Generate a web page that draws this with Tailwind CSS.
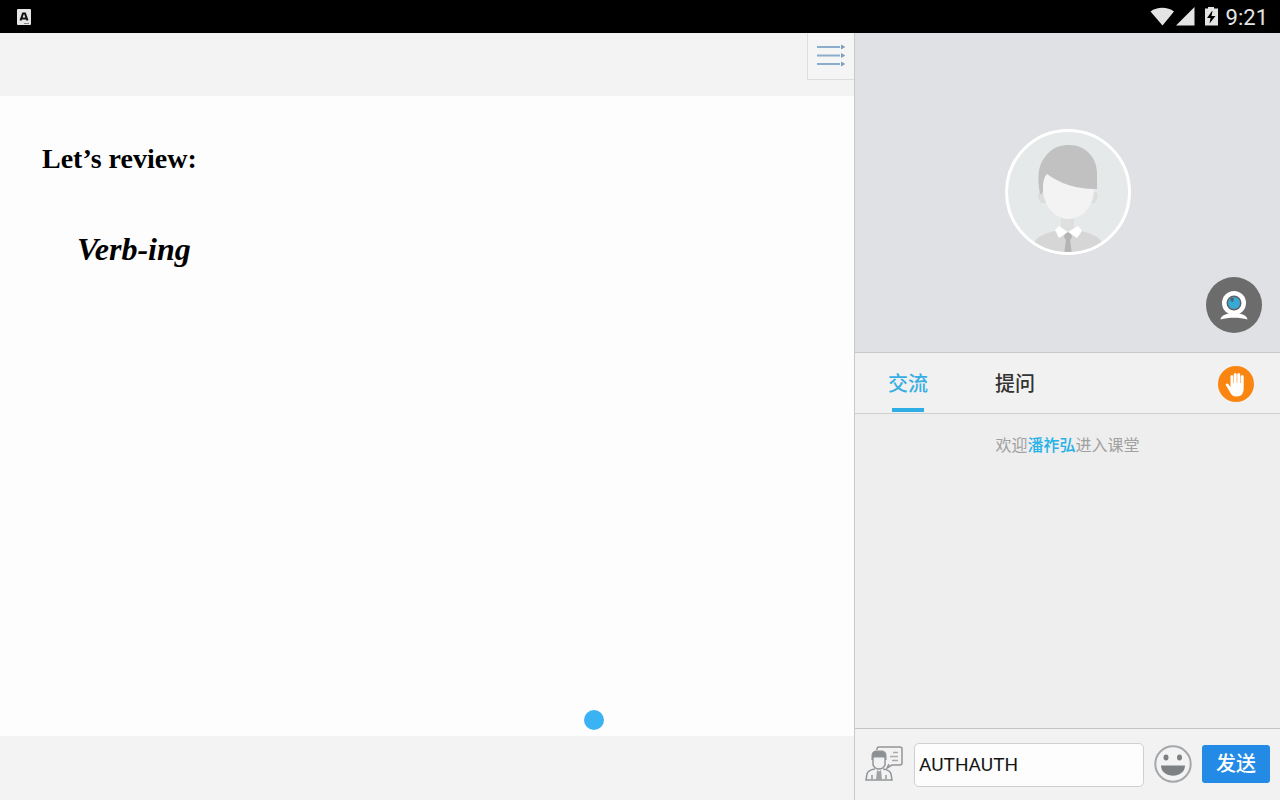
<!DOCTYPE html>
<html lang="zh-CN">
<head>
<meta charset="utf-8">
<meta name="viewport" content="width=device-width, initial-scale=1">
<title>课堂</title>
<script src="https://cdn.jsdelivr.net/npm/@tailwindcss/browser@4"></script>
</head>
<body class="flex h-screen flex-col overflow-hidden bg-[#f3f3f3] font-['Roboto','Noto_Sans_CJK_SC',sans-serif]">
<header class="flex h-[33px] shrink-0 items-center justify-between bg-black pr-3 pl-4 text-[#e4e4e4]">
  <svg class="size-4" viewBox="0 0 16 16" aria-hidden="true">
    <rect x="1" y="0" width="14" height="16" rx="1" fill="#e6e6e6"/>
    <path d="M4.500 11.500 7 4.500h2l2.500 7M5.500 9.500h5" fill="none" stroke="#111" stroke-width="2"/>
    <path d="M8 14.500h5" stroke="#888"/>
  </svg>
  <div class="flex items-center">
    <svg class="h-5 w-[68px]" viewBox="0 0 68 20" fill="#e4e4e4" aria-hidden="true">
      <path d="M.5 4.500C7-.5 17.500-.5 24 4.500L12.500 18.500Z"/>
      <path d="M26 18.500 44.500 0v18.500Z"/>
      <path fill-rule="evenodd" d="M55 1.500h3V-.5h6v2h4v17H55ZM62 4l-5 7h3.500l-1 5.500 6-7.500h-4l1-5Z"/>
    </svg>
    <time class="ml-2 pt-[2px] text-[22px] leading-8">9:21</time>
  </div>
</header>
<main class="grid min-h-0 flex-1 grid-cols-[427fr_213fr]">
  <section class="flex min-w-0 flex-col">
    <div class="flex h-[63px] shrink-0 justify-end">
      <button type="button" aria-label="目录" class="flex h-[47px] w-[47px] items-center justify-center border-b border-l border-[#dcdddd] bg-[#f5f5f5]">
        <svg class="h-6 w-7" viewBox="0 0 28 24" fill="none" stroke="#8caccb" stroke-width="2" aria-hidden="true">
          <path d="M0 3h23M0 11.500h23M0 20h23"/>
          <path d="M24 .5 28.500 3 24 5.500ZM24 9l4.500 2.500L24 14ZM24 17.500l4.500 2.500-4.500 2.500Z" fill="#7d9fc2" stroke="none"/>
        </svg>
      </button>
    </div>
    <article class="relative flex-1 bg-[#fdfdfd] px-[42px] pt-[45px] font-['Liberation_Serif',serif] font-bold text-black">
      <h1 class="text-[28px] leading-9">Let’s review:</h1>
      <p class="mt-13 pl-[35px] text-[32px] leading-10 italic">Verb-ing</p>
      <span class="absolute bottom-[6px] left-[584px] size-5 rounded-full bg-[#3bb3f3]"></span>
    </article>
    <div class="h-16 shrink-0"></div>
  </section>
  <aside class="flex min-w-0 flex-col border-l border-[#c8c9cb] bg-[#eeeeee]">
    <div class="relative flex h-[320px] shrink-0 items-center justify-center border-b border-[#c8c9cb] bg-[#e0e1e5] pb-[2px]">
      <svg class="size-[126px]" viewBox="0 0 126 126" role="img" aria-label="头像">
        <defs><clipPath id="face"><circle cx="63" cy="63" r="61"/></clipPath></defs>
        <circle cx="63" cy="63" r="61" fill="#e6e9ea"/>
        <g clip-path="url(#face)">
          <path d="M27 118c3-11 15-15 29-17h14c14 2 26 6 29 17v8H27Z" fill="#d6d6d6"/>
          <path d="M56 85h13v16l-6 5-7-5Z" fill="#dedfdf"/>
          <path d="M36 64c-4-2-4 8 1 10h52c5-2 5-12 1-11Z" fill="#dcdddd"/>
          <path d="M35 65C32 49 33 36 40 28 47 18 56 16 64 16c17 0 28 13 28 28v16H39l-2 5Z" fill="#c1c1c1"/>
          <path d="M42 45C55 55 73 60 89 60c0 16-10 30-26 30C48 90 37 73 38 58c0-5 1-10 4-13Z" fill="#f3f3f3"/>
          <path d="m54 97-4 4 4 8 9-6 9 6 5-7-4-5-10 6Z" fill="#fff"/>
          <path d="m60 105 3-2 3 2 1 3-2 3 2 14h-8l2-14-2-3Z" fill="#b4b4b4"/>
        </g>
        <circle cx="63" cy="63" r="61.500" fill="none" stroke="#fff" stroke-width="3"/>
      </svg>
      <button type="button" aria-label="摄像头" class="absolute right-[18px] bottom-[19px] size-14 rounded-full bg-[#6c6c6d]">
        <svg class="size-14" viewBox="0 0 56 56" aria-hidden="true">
          <path d="M14.500 42.500c1-5 6-6 13.500-6s12.500 1 13.500 6c-8-2.500-19-2.500-27 0Z" fill="#fff"/>
          <circle cx="28" cy="26" r="12" fill="#fff"/>
          <circle cx="28" cy="26" r="7.500" fill="#5e6268"/>
          <circle cx="28" cy="26" r="6" fill="#38a9d2"/>
          <path d="M24.500 21h3.500l-1 4-2.500-1Z" fill="#53626c"/>
        </svg>
      </button>
    </div>
    <nav class="flex h-[61px] shrink-0 items-center border-b border-[#cfcfcf] bg-[#f1f1f1] pt-[2px] pr-[26px] text-xl font-medium">
      <button type="button" class="relative ml-[33px] h-full w-10 whitespace-nowrap text-[#37aee3] after:absolute after:bottom-px after:left-1 after:h-1 after:w-8 after:bg-[#2fade5]">交流</button>
      <button type="button" class="ml-[67px] h-full w-10 whitespace-nowrap text-[#333333]">提问</button>
      <button type="button" aria-label="举手" class="ml-auto">
        <svg class="size-9" viewBox="0 0 36 36" aria-hidden="true">
          <circle cx="18" cy="18" r="18" fill="#fa8510"/>
          <path d="M12.500 21V10.500q0-1.500 1.300-1.500t1.400 1.500V17h.5V8.500Q15.700 7 17.200 7t1.500 1.500V17h.5V8.500q0-1.500 1.500-1.500t1.500 1.500V17h.5v-6.500q0-1.500 1.500-1.500t1.500 1.500V22c0 5-2 8.500-7 8.500-4 0-5.500-2-7-5l-4-6.500c0-1.500 1.500-2 2.500-1Z" fill="#fff"/>
        </svg>
      </button>
    </nav>
    <div class="min-h-0 flex-1 pt-5 text-center text-base leading-6 text-[#a0a0a0]">
      <p>欢迎<span class="font-medium text-[#26b2e8]">潘祚弘</span>进入课堂</p>
    </div>
    <form class="flex h-[72px] shrink-0 items-center border-t border-[#c4c4c4] bg-[#f2f2f2] px-[10px] pb-[2px]">
      <button type="button" aria-label="只看老师" class="shrink-0">
        <svg class="h-9 w-[38px]" viewBox="0 0 38 36" fill="none" stroke="#929598" stroke-width="1.500" aria-hidden="true">
          <path d="M12 4V3q0-2 2-2h21q2 0 2 2v14q0 2-2 2h-8l-5 3 2-4"/>
          <path d="M28 6.500h5M25 10.500h8M27 14.500h6" stroke="#aaa"/>
          <path d="M8 13v6q2 4 6 4t6-4v-6" fill="#f2f2f2"/>
          <path d="M7 14V9q0-3 3-4h8q3 1 3 4v5l-2-3H9Z" fill="#8d9093" stroke-width="1"/>
          <path d="M10 23q-7 1-8 5l-1 6h26l-1-6q-1-4-8-5M7 29v4M21 29v4"/>
          <path d="m12 24 2 1.500 2-1.500 1 10h-6Z" fill="#a0a3a5" stroke="none"/>
        </svg>
      </button>
      <input type="text" aria-label="消息" value="AUTHAUTH" class="mt-[2px] ml-[11px] h-11 min-w-0 flex-1 rounded-[5px] border border-[#d0d0d0] bg-[#fdfdfd] px-1 text-[19px] text-[#151515] outline-none">
      <button type="button" aria-label="表情" class="ml-[10px] shrink-0">
        <svg class="size-[38px]" viewBox="0 0 38 38" aria-hidden="true">
          <circle cx="19" cy="19" r="17.700" fill="#f3f3f4" stroke="#a5a8aa" stroke-width="2"/>
          <ellipse cx="12" cy="12.500" rx="2.500" ry="3" fill="#7e8183"/>
          <ellipse cx="25.500" cy="12.500" rx="2.500" ry="3" fill="#7e8183"/>
          <path d="M7 20.500h24c0 13.500-24 13.500-24 0Z" fill="#7e8183"/>
        </svg>
      </button>
      <button type="submit" class="ml-[10px] h-[38px] w-[68px] shrink-0 rounded-[3px] bg-[#238ae6] text-xl font-medium text-white">发送</button>
    </form>
  </aside>
</main>
</body>
</html>
